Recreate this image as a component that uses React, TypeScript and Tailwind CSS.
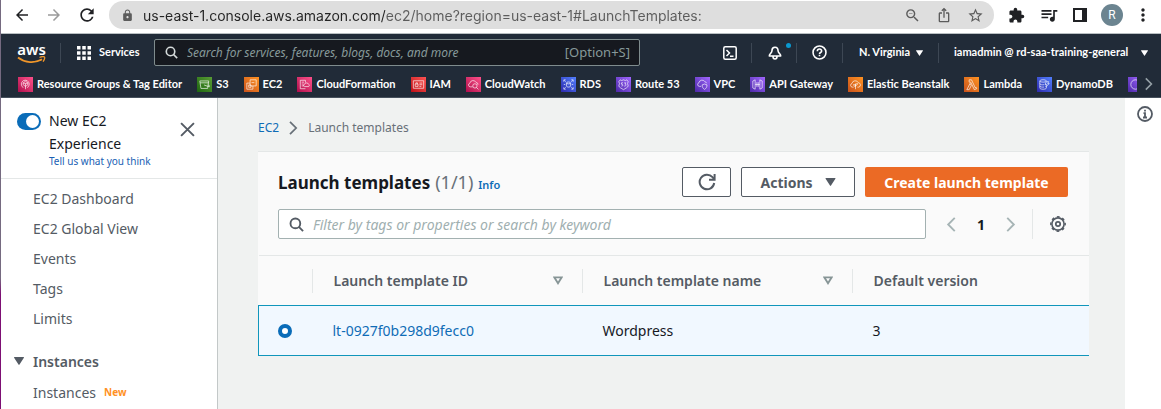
import type { ReactNode } from "react";
import {
  MdArrowBack,
  MdArrowForward,
  MdExtension,
  MdIosShare,
  MdLock,
  MdMoreVert,
  MdOutlineZoomOut,
  MdQueueMusic,
  MdRefresh,
  MdStarOutline,
} from "react-icons/md";

const PINK = "from-[#b0084d] to-[#ff4f8b]";
const GREEN = "from-[#1b660f] to-[#5a9e35]";
const ORANGE = "from-[#c8511b] to-[#ff9322]";
const RED = "from-[#bd0816] to-[#ff5252]";
const BLUE = "from-[#2e27ad] to-[#527fff]";
const PURPLE = "from-[#4d27a8] to-[#a166ff]";

type Favorite = { name: string; tone: string; glyph: ReactNode };

const favorites: Favorite[] = [
  {
    name: "Resource Groups & Tag Editor",
    tone: PINK,
    glyph: (
      <>
        <path d="M4 9.5a4.2 4.2 0 1 1 7.5 0M5.5 11.5 4 9.5M10 11.5l1.5-2" />
        <path d="m8 4.5 2.5 1.8v2L8 10 5.500 8.300v-2zM8 7v6M5.500 6.300 8 7l2.500-.7" />
      </>
    ),
  },
  {
    name: "S3",
    tone: GREEN,
    glyph: (
      <>
        <path d="M3 4.200h9.500l-1.200 8H4.200zM3.300 6.200h9" />
        <path d="M7.500 8.500 13 10.500l.3-1.200-1.600-.9" />
      </>
    ),
  },
  {
    name: "EC2",
    tone: ORANGE,
    glyph: (
      <>
        <path d="M6.500 3h6.500v6.500H6.500z" />
        <path d="M9.500 9.500V13H3V6.500h3.500M5 8.500h2.500V11H5zM8 6h3" />
      </>
    ),
  },
  {
    name: "CloudFormation",
    tone: PINK,
    glyph: (
      <>
        <path d="M9 12.500H3.500v-9H9V6M5 5.500h2.500M5 7.500h2M5 9.500h2.500" />
        <path d="M8 10.200h4a1.300 1.300 0 0 0 .3-2.500A2.200 2.200 0 0 0 8.300 7.500 1.400 1.400 0 0 0 8 10.200z" />
      </>
    ),
  },
  {
    name: "IAM",
    tone: RED,
    glyph: (
      <>
        <path d="M2.500 4h11v8h-11zM9 6.500h3M9 8.200h3M9 10h2" />
        <path d="M4.500 7.500h3V10h-3zM5.200 7.500V6.200h1.600v1.300" />
      </>
    ),
  },
  {
    name: "CloudWatch",
    tone: PINK,
    glyph: (
      <>
        <path d="M7 10.500H4.500a2 2 0 0 1-.4-3.900 3.500 3.500 0 0 1 6.600-.8 2.300 2.300 0 0 1 2.100 2.500" />
        <circle cx="9.500" cy="9.500" r="2.300" />
        <path d="m11.200 11.200 2 2" />
      </>
    ),
  },
  {
    name: "RDS",
    tone: BLUE,
    glyph: (
      <>
        <path d="M3 5V3h2M11 3h2v2M13 11v2h-2M5 13H3v-2M3.500 3.500 5 5M12.500 3.500 11 5M3.500 12.500 5 11M12.500 12.500 11 11" />
        <ellipse cx="8" cy="6.300" rx="2.200" ry="1" />
        <path d="M5.800 6.300v3.500c0 1.300 4.400 1.300 4.400 0V6.300M3 8h1.500M11.500 8H13" />
      </>
    ),
  },
  {
    name: "Route 53",
    tone: PURPLE,
    glyph: (
      <>
        <path d="m4.500 3 1.500.8L8 3l2 .8 1.500-.8L13 5l-.7 2L13 9.500c-.5 2-3 2.500-5 4-2-1.500-4.500-2-5-4L3.700 7 3 5z" />
        <path d="M7.500 6.200H5.800v1.500c2-.3 2 2.300 0 2M8.800 6.200h1.700L9.500 7.500c1.800 0 1.500 2.500-.7 2.200" />
      </>
    ),
  },
  {
    name: "VPC",
    tone: PURPLE,
    glyph: (
      <>
        <path d="M6.500 10H4.700a2 2 0 0 1-.5-3.900 3.500 3.500 0 0 1 6.500-.9 2 2 0 0 1 1.800 1.500" />
        <path d="m10.200 7.500 2.600.9c0 2.300-.8 3.700-2.600 4.800-1.800-1.100-2.600-2.500-2.600-4.800z" />
      </>
    ),
  },
  {
    name: "API Gateway",
    tone: PURPLE,
    glyph: <path d="M5.500 3v10L3 11.700V4.300zM10.500 3v10l2.500-1.300V4.300zM7.300 5.500v5M8.800 5.500v5M5.500 8h5" />,
  },
  {
    name: "Elastic Beanstalk",
    tone: ORANGE,
    glyph: (
      <>
        <path d="M6 10.800H4.500a2 2 0 0 1-.3-3.900 3.600 3.600 0 0 1 6.800-.8 2.400 2.400 0 0 1 .5 4.700H10" />
        <path d="M8 13V7M8 10c-2 0-2-1.200-2-2 1.300 0 2 .6 2 2zM8 9c0-1.500.8-2 2.200-2 0 1.200-.7 2-2.200 2z" />
      </>
    ),
  },
  {
    name: "Lambda",
    tone: ORANGE,
    glyph: <path d="M5.500 3H8l4 8.500 1-.5.500 1.500-2.500 1L7.200 5.500H5.500zM6.500 6.800l1.200 2.400L5.500 13.500H3z" />,
  },
  {
    name: "DynamoDB",
    tone: BLUE,
    glyph: (
      <>
        <ellipse cx="6.500" cy="4.200" rx="3.500" ry="1.300" />
        <path d="M3 4.200v7.500c0 1.800 7 1.800 7 0V10M3 7c0 1.300 3 1.500 4.500 1.200M3 9.500c0 1.200 3 1.500 4.500 1.200" />
        <path d="m10 5-1.500 3h1.700l-.7 2.500L13 7h-1.600l1-2z" />
      </>
    ),
  },
];

function ServiceTile({ tone, children }: { tone: string; children: ReactNode }) {
  return (
    <span className={`size-[15px] shrink-0 bg-linear-to-tr ${tone}`}>
      <svg viewBox="0 0 16 16" className="size-full" fill="none" stroke="white" strokeOpacity="0.85" strokeWidth="0.8">
        {children}
      </svg>
    </span>
  );
}

function Caret({ className }: { className: string }) {
  return (
    <svg viewBox="0 0 10 8" className={className} fill="currentColor" aria-hidden="true">
      <path d="M.5 0h9a.5.5 0 0 1 .4.800L5.500 7.600a.600.600 0 0 1-1 0L.1.8A.5.5 0 0 1 .5 0z" />
    </svg>
  );
}

function SearchIcon({ className }: { className: string }) {
  return (
    <svg viewBox="0 0 16 16" className={className} fill="none" stroke="currentColor" strokeWidth="2" aria-hidden="true">
      <circle cx="6.800" cy="6.800" r="5.200" />
      <path d="m10.500 10.500 4.500 4.500" />
    </svg>
  );
}

function Chevron({ className, left = false }: { className: string; left?: boolean }) {
  return (
    <svg viewBox="0 0 10 16" className={className} fill="none" stroke="currentColor" strokeWidth="2" aria-hidden="true">
      <path d={left ? "M9 1 2 8l7 7" : "m1 1 7 7-7 7"} />
    </svg>
  );
}

function Divider() {
  return <span className="h-5 w-px shrink-0 bg-[#3d4754]" />;
}

function BrowserBar() {
  return (
    <div className="flex h-[34px] items-start border-b border-[#b9bfc2] bg-white text-[#202124]">
      <div className="flex h-[29px] w-[108px] shrink-0 items-center gap-[14px] pl-3">
        <button aria-label="Back"><MdArrowBack className="size-[18px]" /></button>
        <button aria-label="Forward" className="text-[#9b9b9b]"><MdArrowForward className="size-[18px]" /></button>
        <button aria-label="Reload"><MdRefresh className="size-5" /></button>
      </div>
      <div className="mt-px flex h-7 flex-1 items-center rounded-full bg-[#dedede] pr-[10px] pl-3 text-[#5c5c5c]">
        <MdLock className="size-[13px] shrink-0" />
        <input
          type="text"
          aria-label="Address"
          defaultValue="us-east-1.console.aws.amazon.com/ec2/home?region=us-east-1#LaunchTemplates:"
          className="ml-[9px] min-w-0 flex-1 bg-[linear-gradient(90deg,#242424_242px,#5c5c5c_242px)] bg-clip-text font-[Inter,sans-serif] text-[14px] text-transparent outline-none"
        />
        <div className="flex items-center gap-[15px]">
          <button aria-label="Zoom out"><MdOutlineZoomOut className="size-[17px]" /></button>
          <button aria-label="Share"><MdIosShare className="size-4" /></button>
          <button aria-label="Bookmark"><MdStarOutline className="size-[17px]" /></button>
        </div>
      </div>
      <div className="flex h-[30px] shrink-0 items-center gap-[14px] pr-3 pl-[14px]">
        <button aria-label="Extensions"><MdExtension className="size-[17px]" /></button>
        <button aria-label="Media"><MdQueueMusic className="size-5" /></button>
        <button aria-label="Side panel" className="h-[14px] w-[14px] border-2 border-r-[5px] border-[#202124]" />
        <button aria-label="Profile" className="size-[22px] rounded-full bg-[#6b8490] font-[Roboto,sans-serif] text-[12px] text-white">R</button>
        <button aria-label="Menu" className="-mx-1"><MdMoreVert className="size-5" /></button>
      </div>
    </div>
  );
}

function ConsoleNav() {
  return (
    <header className="border-b border-[#46505c] bg-[#212b38] font-[Lato,sans-serif] text-[11px] font-bold text-white">
      <div className="flex h-[37px] items-center">
        <a href="#home" aria-label="aws" className="ml-4 w-[29px] shrink-0 font-['Noto_Sans',sans-serif]">
          <span className="block text-center text-[15px] leading-[14px] font-semibold">aws</span>
          <svg viewBox="0 0 29 8" className="block h-2 w-full" fill="none" stroke="#f0962a">
            <path d="M1 1.500c7 5.500 17 6 24 1.800" strokeWidth="1.800" />
            <path d="M22.500 1.500c2-.9 4.500-.9 5-.5s0 2.800-1.500 4.700" strokeWidth="1.300" />
          </svg>
        </a>
        <div className="mr-4 ml-[14px] flex"><Divider /></div>
        <button className="flex w-[61px] items-center gap-2">
          <svg viewBox="0 0 14 14" className="size-[14px] shrink-0" fill="currentColor" aria-hidden="true">
            <path d="M0 0h3.500v3.500H0zM5.250 0h3.500v3.500h-3.500zM10.500 0H14v3.500h-3.500zM0 5.250h3.500v3.500H0zM5.250 5.250h3.500v3.500h-3.500zM10.500 5.250H14v3.500h-3.500zM0 10.500h3.500V14H0zM5.250 10.500h3.500V14h-3.500zM10.500 10.500H14V14h-3.500z" />
          </svg>
          Services
        </button>
        <label className="ml-4 flex h-[27px] w-[486px] items-center rounded-xs border border-[#7f8c8d] bg-[#16191f] pr-[9px] pl-[10px] font-['Noto_Sans',sans-serif] font-normal text-[#95a5a6]">
          <SearchIcon className="size-[13px] shrink-0 text-[#d5dbdb]" />
          <input
            type="search"
            aria-label="Search"
            placeholder="Search for services, features, blogs, docs, and more"
            className="ml-[9px] min-w-0 flex-1 bg-transparent text-[12px] outline-none placeholder:text-[#87999a] placeholder:italic"
          />
          <span className="text-[13px] text-[#87999a]">[Option+S]</span>
        </label>
        <div className="ml-auto flex items-center">
          <button aria-label="CloudShell">
            <svg viewBox="0 0 14 14" className="size-[14px]" fill="none" stroke="currentColor" strokeWidth="1.500">
              <rect x=".8" y=".8" width="12.400" height="12.400" rx="1.500" />
              <path d="m3.500 4 3 3-3 3M7 10.200h3.500" />
            </svg>
          </button>
          <div className="mr-4 ml-[14px] flex"><Divider /></div>
          <button aria-label="Notifications" className="relative">
            <svg viewBox="0 0 14 14" className="size-[14px]" fill="none" stroke="currentColor" strokeWidth="1.600" strokeLinejoin="round">
              <path d="M7 1.200c-2.200 0-3 1.500-3 3.300C4 7 1.300 8 1.300 10h11.400C12.700 8 10 7 10 4.500c0-1.800-.8-3.300-3-3.300zM5 10.500c0 3.300 4 3.300 4 0" />
            </svg>
            <span className="absolute -top-[3px] -right-[9px] size-[5px] rounded-full bg-[#0a99d0]" />
          </button>
          <div className="mr-[15px] ml-[14px] flex"><Divider /></div>
          <button aria-label="Help">
            <svg viewBox="0 0 16 16" className="size-[15px]" fill="none" stroke="currentColor" strokeWidth="1.700">
              <circle cx="8" cy="8" r="6.900" />
              <path d="M5.700 6.600C5.700 3.600 10.300 3.600 10.300 6.400 10.300 8 8 8 8 9.500M8 10.500v1.600" />
            </svg>
          </button>
          <div className="mr-4 ml-[15px] flex"><Divider /></div>
          <button className="flex items-center gap-[6px]">N. Virginia<Caret className="h-[6px] w-[7px]" /></button>
          <div className="mx-[15px] flex"><Divider /></div>
          <button className="mr-[13px] flex w-[194px] items-center justify-between">
            iamadmin @ rd-saa-training-general
            <Caret className="h-[6px] w-[7px]" />
          </button>
        </div>
      </div>
      <nav aria-label="Favorites" className="flex h-[26px] items-center pl-[17px]">
        <ul className="flex min-w-0 flex-1 items-center gap-[15px] overflow-hidden">
          {favorites.map((item) => (
            <li key={item.name} className="shrink-0">
              <a href="#service" className="flex items-center gap-1">
                <ServiceTile tone={item.tone}>{item.glyph}</ServiceTile>
                {item.name}
              </a>
            </li>
          ))}
          <li className="flex shrink-0">
            <ServiceTile tone={PURPLE}>
              <circle cx="8" cy="8" r="5" />
            </ServiceTile>
          </li>
        </ul>
        <button aria-label="Scroll favorites" className="mr-2 ml-2 text-[#95a0a6]"><Chevron className="h-[14px] w-2" /></button>
      </nav>
    </header>
  );
}

function Sidebar() {
  return (
    <aside className="w-[217px] shrink-0 overflow-hidden border-r border-[#c3c8c8] bg-white text-[14px] text-[#545b64]">
      <div className="flex h-[81px] border-b border-[#e4e7e7] pt-[11px] pr-[22px] pl-4">
        <input
          id="experience"
          type="checkbox"
          role="switch"
          defaultChecked
          className="mt-1 flex h-[17px] w-6 shrink-0 appearance-none items-center rounded-full bg-[#0a6cb8] pl-[9px] before:size-[13px] before:rounded-full before:bg-white"
        />
        <div className="ml-2 flex-1">
          <label htmlFor="experience" className="block w-24 leading-[23px] text-[#16191f]">New EC2 Experience</label>
          <a href="#feedback" className="block text-[10px] leading-3 text-[#1a5fb4]">Tell us what you think</a>
        </div>
        <button aria-label="Close" className="mt-[13px] self-start text-[#545b64]">
          <svg viewBox="0 0 14 14" className="size-[15px]" fill="none" stroke="currentColor" strokeWidth="1.800">
            <path d="m1 1 12 12M13 1 1 13" />
          </svg>
        </button>
      </div>
      <ul className="pt-1 pl-8">
        {["EC2 Dashboard", "EC2 Global View", "Events", "Tags", "Limits"].map((name) => (
          <li key={name} className="flex h-[30px] items-center">
            <a href="#section">{name}</a>
          </li>
        ))}
      </ul>
      <button className="mt-[13px] flex h-[30px] items-center gap-[9px] pl-[13px] font-semibold">
        <Caret className="h-2 w-[10px]" />
        Instances
      </button>
      <ul className="pl-8">
        <li className="flex h-8 items-center gap-2">
          <a href="#instances">Instances</a>
          <span className="text-[10px] font-bold text-[#ff9124]">New</span>
        </li>
      </ul>
    </aside>
  );
}

function HeadCell({ children, sortable = false }: { children: ReactNode; sortable?: boolean }) {
  return (
    <th scope="col" className="p-0 text-left font-semibold text-[#545b64]">
      <div className="flex h-6 items-center justify-between border-l border-[#e4e7e7] pr-[19px] pl-[21px]">
        {children}
        {sortable && (
          <svg viewBox="0 0 10 9" className="h-[9px] w-[10px]" fill="none" stroke="#879596" strokeWidth="1.800" aria-hidden="true">
            <path d="M1.300 1.300h7.400L5 7.300z" />
          </svg>
        )}
      </div>
    </th>
  );
}

function TemplatesPanel() {
  return (
    <section className="border-t border-[#e4e7e7] bg-[#fafafa]">
      <div className="flex items-center gap-[10px] pt-[15px] pr-[21px] pl-5">
        <h1 className="mr-auto flex items-baseline gap-[5px] text-[17px] font-bold text-[#16191f]">
          Launch templates
          <span className="text-[18px] font-normal text-[#687078]">(1/1)</span>
          <a href="#info" className="text-[11px] font-semibold text-[#0f6cb6]">Info</a>
        </h1>
        <button aria-label="Refresh" className="flex h-[30px] w-[49px] items-center justify-center rounded-xs border border-[#545b64] bg-white text-[#545b64]">
          <svg viewBox="0 0 18 18" className="size-[18px]" fill="none" stroke="currentColor" strokeWidth="2">
            <path d="M16.200 10A7.300 7.300 0 1 1 14.500 4.200L16 6" />
            <path d="M16.600 1v5.800H11" />
          </svg>
        </button>
        <button className="flex h-[30px] w-[114px] items-center justify-center gap-3 rounded-xs border border-[#545b64] bg-white text-[14px] font-bold text-[#545b64]">
          Actions
          <Caret className="h-2 w-[11px]" />
        </button>
        <button className="h-[30px] w-[203px] rounded-xs bg-[#eb6a25] text-[14px] font-bold text-white">Create launch template</button>
      </div>
      <div className="flex items-center px-5 pt-3 pb-4">
        <label className="flex h-[30px] flex-1 items-center rounded-xs border border-[#a3b1b1] bg-white pl-[10px]">
          <SearchIcon className="size-[15px] shrink-0 text-[#545b64]" />
          <input
            type="search"
            aria-label="Filter launch templates"
            placeholder="Filter by tags or properties or search by keyword"
            className="ml-[9px] min-w-0 flex-1 text-[14px] outline-none placeholder:text-[#a0afb0] placeholder:italic"
          />
        </label>
        <div className="ml-5 flex items-center gap-[21px] text-[#a6b4b5]">
          <button aria-label="Previous page"><Chevron left className="h-[15px] w-[10px]" /></button>
          <span className="text-[14px] font-bold text-[#16191f]">1</span>
          <button aria-label="Next page"><Chevron className="h-[15px] w-[10px]" /></button>
        </div>
        <span className="mr-[17px] ml-4 h-[30px] w-px bg-[#e4e7e7]" />
        <button aria-label="Preferences" className="mr-[3px] text-[#545b64]">
          <svg viewBox="0 0 16 16" className="size-4" fill="none" stroke="currentColor">
            <circle cx="8" cy="8" r="6.100" strokeWidth="1.600" />
            <circle cx="8" cy="8" r="7.200" strokeWidth="1.400" strokeDasharray="2.827 2.827" strokeDashoffset="1.400" />
            <circle cx="8" cy="8" r="2.200" strokeWidth="1.700" />
          </svg>
        </button>
      </div>
      <table className="w-full table-fixed border-collapse border-t border-[#e4e7e7] text-[14px]">
        <colgroup>
          <col className="w-[53px]" />
          <col className="w-[270px]" />
          <col className="w-[270px]" />
          <col />
        </colgroup>
        <thead>
          <tr className="h-[50px]">
            <th aria-label="Selection" />
            <HeadCell sortable>Launch template ID</HeadCell>
            <HeadCell sortable>Launch template name</HeadCell>
            <HeadCell>Default version</HeadCell>
          </tr>
        </thead>
        <tbody>
          <tr className="h-[50px] border-y border-[#1096bb] bg-[#f1f8ff] text-[#16191f]">
            <td className="border-l border-[#1096bb] pl-[19px]">
              <input
                type="radio"
                name="template"
                aria-label="Select lt-0927f0b298d9fecc0"
                defaultChecked
                className="block size-[14px] appearance-none rounded-full border-4 border-[#0a6cb8] bg-white"
              />
            </td>
            <td className="pl-[21px]"><a href="#template" className="text-[#0f6cb6]">lt-0927f0b298d9fecc0</a></td>
            <td className="pl-[21px]">Wordpress</td>
            <td className="pl-[21px]">3</td>
          </tr>
        </tbody>
      </table>
    </section>
  );
}

export default function App() {
  return (
    <div className="flex h-screen overflow-hidden font-['Noto_Sans',sans-serif] [&_input::-webkit-search-cancel-button]:hidden">
      <div className="w-px shrink-0 bg-[linear-gradient(#756a80_68%,#7d0f74_72%)]" />
      <div className="flex min-w-0 flex-1 flex-col">
        <BrowserBar />
        <ConsoleNav />
        <div className="flex min-h-0 flex-1">
          <Sidebar />
          <main className="min-w-0 flex-1 bg-[#f0f2f1] pr-9 pl-10">
            <nav aria-label="Breadcrumb" className="flex h-[53px] items-center gap-[10px] pt-[6px] text-[12px]">
              <a href="#ec2" className="text-[#0f6cb6]">EC2</a>
              <Chevron className="h-[14px] w-[9px] text-[#687078]" />
              <span className="text-[#687078]">Launch templates</span>
            </nav>
            <TemplatesPanel />
          </main>
          <aside className="w-9 shrink-0 bg-white pt-2 pl-3">
            <button aria-label="Information" className="block text-[#545b64]">
              <svg viewBox="0 0 16 16" className="size-4" fill="none" stroke="currentColor" strokeWidth="1.800">
                <circle cx="8" cy="8" r="7" />
                <path d="M8 3.800v1.700M6.500 7.200H8v4M6 11.500h4" />
              </svg>
            </button>
          </aside>
        </div>
      </div>
    </div>
  );
}
